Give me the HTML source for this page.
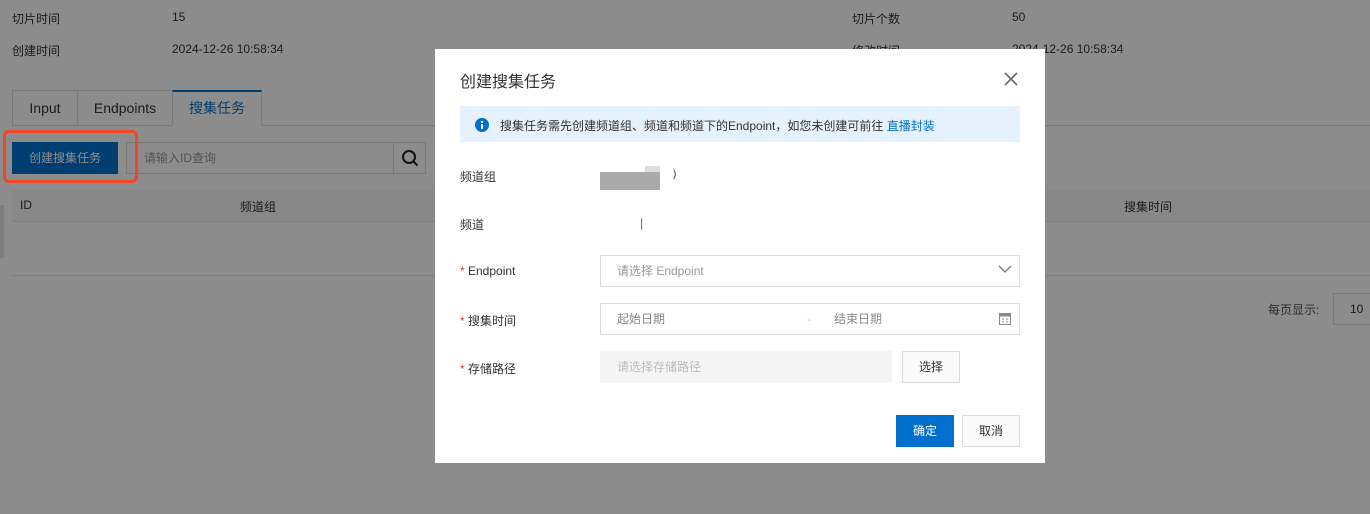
<!DOCTYPE html>
<html><head><meta charset="utf-8"><style>
*{box-sizing:border-box;margin:0;padding:0}
body{width:1370px;height:514px;overflow:hidden;position:relative;background:#fff;font-family:"Liberation Sans","Noto Sans CJK SC",sans-serif;font-size:12px;color:#333}
.a{position:absolute;white-space:nowrap}
.ov{position:absolute;left:0;top:0;width:1370px;height:514px;background:rgba(0,0,0,.45)}
.m{position:absolute;left:435px;top:49px;width:610px;height:414px;background:#fff}
.f{position:absolute;border:1px solid #dcdcdc;background:#fff;height:32px;line-height:30px;padding-left:16px;color:#999}
</style></head><body>
<div class="a" style="left:12px;top:10px">切片时间</div><div class="a" style="left:172px;top:10px">15</div>
<div class="a" style="left:852px;top:10px">切片个数</div><div class="a" style="left:1012px;top:10px">50</div>
<div class="a" style="left:12px;top:42px">创建时间</div><div class="a" style="left:172px;top:42px">2024-12-26 10:58:34</div>
<div class="a" style="left:852px;top:42px">修改时间</div><div class="a" style="left:1012px;top:42px">2024-12-26 10:58:34</div>
<div class="a" style="left:12px;top:125px;width:1358px;border-top:1px solid #ddd"></div>
<div class="a" style="left:12px;top:90px;width:66px;height:36px;border:1px solid #ddd;border-bottom:none;line-height:34px;text-align:center;font-size:14px;color:#333">Input</div>
<div class="a" style="left:78px;top:90px;width:95px;height:36px;border:1px solid #ddd;border-left:none;border-bottom:none;line-height:34px;text-align:center;font-size:14px">Endpoints</div>
<div class="a" style="left:172px;top:90px;width:90px;height:36px;border:1px solid #ddd;border-top:2px solid #0070cc;border-bottom:1px solid #fff;line-height:32px;text-align:center;font-size:14px;color:#0070cc;background:#fff">搜集任务</div>
<div class="a" style="left:12px;top:142px;width:106px;height:32px;background:#0070cc;color:#fff;line-height:32px;text-align:center">创建搜集任务</div>
<div class="a" style="left:126px;top:142px;width:268px;height:32px;border:1px solid #ddd;line-height:30px;padding-left:17px;color:#999">请输入ID查询</div>
<div class="a" style="left:393px;top:142px;width:33px;height:32px;border:1px solid #ddd"><svg width="31" height="30"><circle cx="15" cy="14" r="6" fill="none" stroke="#222" stroke-width="2"/><path d="M19.5 18.5l4 4" stroke="#222" stroke-width="2"/></svg></div>
<div class="a" style="left:12px;top:190px;width:1358px;height:32px;background:#f7f7f7;border-bottom:1px solid #e6e6e6"></div>
<div class="a" style="left:20px;top:198px">ID</div><div class="a" style="left:240px;top:198px">频道组</div><div class="a" style="left:1124px;top:198px">搜集时间</div>
<div class="a" style="left:12px;top:275px;width:1358px;border-top:1px solid #e6e6e6"></div>
<div class="a" style="left:1268px;top:301px;color:#555">每页显示:</div>
<div class="a" style="left:1333px;top:293px;width:50px;height:32px;border:1px solid #ddd;line-height:30px;padding-left:16px">10</div>
<div class="a" style="left:0;top:205px;width:4px;height:53px;background:#e5e5e5"></div>
<div class="ov"></div>
<div class="a" style="left:3px;top:130px;width:135px;height:53px;border:3px solid #f0462a;border-radius:6px"></div>
<div class="m">
<div class="a" style="left:25px;top:19px;font-size:16px;color:#333">创建搜集任务</div>
<svg class="a" style="left:568px;top:22px" width="16" height="16"><path d="M2 2L14 14M14 2L2 14" stroke="#666" stroke-width="1.6"/></svg>
<div class="a" style="left:25px;top:57px;width:560px;height:36px;background:#e5f1fc"></div>
<svg class="a" style="left:40px;top:69px" width="14" height="14"><circle cx="7" cy="7" r="7" fill="#0070cc"/><rect x="6" y="6" width="2" height="5" fill="#fff"/><rect x="6" y="3" width="2" height="2" fill="#fff"/></svg>
<div class="a" style="left:65px;top:68px;color:#333">搜集任务需先创建频道组、频道和频道下的Endpoint，如您未创建可前往 <span style="color:#0070cc">直播封装</span></div>
<div class="a" style="left:25px;top:119px">频道组</div>
<div class="a" style="left:165px;top:123px;width:60px;height:18px;background:#aaa"></div>
<div class="a" style="left:210px;top:117px;width:15px;height:6px;background:#ddd"></div>
<div class="a" style="left:238px;top:120px;font-size:10px">)</div>
<div class="a" style="left:25px;top:167px">频道</div>
<div class="a" style="left:205px;top:167px;color:#666">|</div>
<div class="a" style="left:25px;top:215px"><span style="color:#e33">*</span> Endpoint</div>
<div class="f" style="left:165px;top:206px;width:420px">请选择 Endpoint</div>
<svg class="a" style="left:563px;top:215px" width="14" height="10"><path d="M1 2l6 6 6-6" fill="none" stroke="#777" stroke-width="1.3"/></svg>
<div class="a" style="left:25px;top:263px"><span style="color:#e33">*</span> 搜集时间</div>
<div class="f" style="left:165px;top:254px;width:420px;color:#888">起始日期<span style="position:absolute;left:206px;color:#bbb">-</span><span style="position:absolute;left:233px">结束日期</span></div>
<svg class="a" style="left:564px;top:263px" width="12" height="13"><rect x="0.5" y="1.5" width="11" height="11" fill="none" stroke="#888"/><rect x="0.5" y="1.5" width="11" height="3" fill="#888"/><path d="M3 7h2M7 7h2M3 10h2M7 10h2" stroke="#888"/></svg>
<div class="a" style="left:25px;top:311px"><span style="color:#e33">*</span> 存储路径</div>
<div class="a" style="left:165px;top:302px;width:292px;height:32px;background:#f5f5f5;line-height:32px;padding-left:17px;color:#bbb">请选择存储路径</div>
<div class="a" style="left:467px;top:302px;width:58px;height:32px;border:1px solid #dcdcdc;background:#fafafa;line-height:30px;text-align:center">选择</div>
<div class="a" style="left:461px;top:366px;width:58px;height:32px;background:#0070cc;color:#fff;line-height:32px;text-align:center">确定</div>
<div class="a" style="left:527px;top:366px;width:58px;height:32px;border:1px solid #dcdcdc;background:#fafafa;line-height:30px;text-align:center">取消</div>
</div>
</body></html>
